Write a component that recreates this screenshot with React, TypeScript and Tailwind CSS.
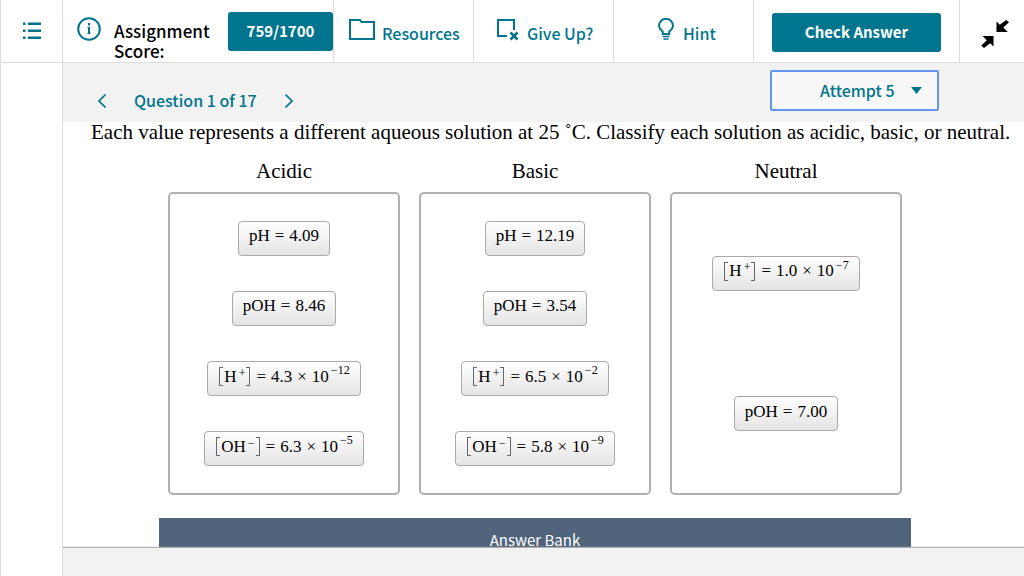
import { Fragment, useState } from "react";
import type { ReactNode } from "react";
import clsx from "clsx";

type Tile = {
  ion?: string;
  charge?: string;
  label?: string;
  value: string;
  exponent?: string;
};

const bins: { title: string; tiles: Tile[] }[] = [
  {
    title: "Acidic",
    tiles: [
      { label: "pH", value: "4.09" },
      { label: "pOH", value: "8.46" },
      { ion: "H", charge: "+", value: "4.3", exponent: "−12" },
      { ion: "OH", charge: "−", value: "6.3", exponent: "−5" },
    ],
  },
  {
    title: "Basic",
    tiles: [
      { label: "pH", value: "12.19" },
      { label: "pOH", value: "3.54" },
      { ion: "H", charge: "+", value: "6.5", exponent: "−2" },
      { ion: "OH", charge: "−", value: "5.8", exponent: "−9" },
    ],
  },
  {
    title: "Neutral",
    tiles: [
      { ion: "H", charge: "+", value: "1.0", exponent: "−7" },
      { label: "pOH", value: "7.00" },
    ],
  },
];

function Sup({ children }: { children: ReactNode }) {
  return <span className="ml-[2px] self-start text-[12px] leading-4">{children}</span>;
}

// tall thin bracket around an ion
function Bracket({ side }: { side: "left" | "right" }) {
  return (
    <span
      className={clsx(
        "h-[19px] w-1 border-y border-[#666]",
        side === "left" ? "mr-px border-l" : "ml-px border-r"
      )}
    />
  );
}

function TileButton({ tile }: { tile: Tile }) {
  return (
    <button
      type="button"
      className="flex h-[35px] items-center rounded border border-[#a9a9a9] bg-linear-to-b from-white to-[#e4e4e4] px-[10px] pb-1 font-['Liberation_Serif',serif] text-[17px] leading-6 whitespace-nowrap text-black"
    >
      {tile.label && <span>{tile.label}</span>}
      {tile.ion && (
        <span className="mx-px flex items-center">
          <Bracket side="left" />
          <span>{tile.ion}</span>
          <Sup>{tile.charge}</Sup>
          <Bracket side="right" />
        </span>
      )}
      <span className="mx-[5px]">=</span>
      <span>{tile.value}</span>
      {tile.exponent && (
        <Fragment>
          <span className="mx-[5px]">×</span>
          <span>10</span>
          <Sup>{tile.exponent}</Sup>
        </Fragment>
      )}
    </button>
  );
}

function ToolButton({ label, className, children }: { label: string; className?: string; children: ReactNode }) {
  return (
    <button
      type="button"
      className={clsx("flex items-center border-l border-[#dcdcdc] text-[16px] font-medium text-[#00758d]", className)}
    >
      {children}
      <span className="pt-[3px]">{label}</span>
    </button>
  );
}

export default function App() {
  const [attempt, setAttempt] = useState("5");

  return (
    <div className="flex h-screen overflow-hidden border-l border-[#dcdcdc] bg-white font-['Noto_Sans_CJK_SC',sans-serif] text-black">
      <aside className="w-[62px] shrink-0 border-r border-[#dcdcdc]">
        <button type="button" aria-label="Contents" className="flex h-[63px] w-full items-center justify-center border-b border-[#dcdcdc] text-[#00758d]">
          <svg className="h-[18px] w-[18px]" viewBox="0 0 18 18" fill="currentColor">
            <path d="M0 .5h2.500v2.500H0zM5 .5h13v2.500H5zM0 7.500h2.500v2.500H0zM5 7.500h13v2.500H5zM0 14.500h2.500v2.500H0zM5 14.500h13v2.500H5z" />
          </svg>
        </button>
      </aside>

      <div className="flex min-w-0 flex-1 flex-col overflow-hidden">
        <header className="flex h-[63px] shrink-0 border-b border-[#dcdcdc]">
          <div className="flex min-w-0 flex-1 items-start">
            <button type="button" aria-label="Score information" className="mt-[17px] ml-[14px] shrink-0 text-[#00758d]">
              <svg className="h-6 w-6" viewBox="0 0 24 24" fill="none" stroke="currentColor" strokeWidth={2}>
                <circle cx="12" cy="12" r="10.800" />
                <path d="M12 10v7M12 6v2.500" />
                <path d="M10.500 10.500H12M10.500 16.500h3" strokeWidth={1} />
              </svg>
            </button>
            <div className="mt-[21px] ml-[13px] flex-1 text-[17px] leading-5 font-medium">Assignment Score:</div>
            <div className="mt-3 flex h-[39px] w-[105px] shrink-0 items-center justify-center rounded-[3px] bg-[#00758d] text-[15px] font-bold text-white">759/1700</div>
          </div>
          <ToolButton label="Resources" className="w-[140px] gap-[7px] pl-[15px]">
            <svg className="mb-1 h-[22px] w-[26px]" viewBox="0 0 26 22" fill="none" stroke="currentColor" strokeWidth={2}>
              <path d="M1 21V2h10l1.500 2H25v17z" />
            </svg>
          </ToolButton>
          <ToolButton label="Give Up?" className="w-[140px] gap-2 pl-[22px]">
            <svg className="mb-1 h-[23px] w-[23px]" viewBox="0 0 23 23" fill="none" stroke="currentColor" strokeWidth={2}>
              <path d="M18 12V2H2V18H11" />
              <path d="M14.500 14.500l7 7M21.500 14.500l-7 7" strokeWidth={2.6} />
            </svg>
          </ToolButton>
          <ToolButton label="Hint" className="w-[140px] gap-[9px] pl-11">
            <svg className="mb-1 h-[22px] w-4" viewBox="0 0 16 22" fill="none" stroke="currentColor" strokeWidth={2}>
              <path d="M4.700 16v-2.500C3 12 1 10.500 1 7.800a7 7 0 0 1 14 0c0 2.700-2 4.200-3.700 5.700V16z" />
              <path d="M4.500 18.500h7M5.500 21h5" strokeWidth={1.5} />
            </svg>
          </ToolButton>
          <div className="flex w-[206px] items-center border-l border-[#dcdcdc] px-[18px] pt-[2px]">
            <button type="button" className="h-[39px] w-full rounded-[3px] bg-[#00758d] text-[15px] font-bold text-white">Check Answer</button>
          </div>
          <button type="button" aria-label="Exit full screen" className="flex w-[65px] items-center justify-center border-l border-[#dcdcdc] pt-[6px] pl-[6px]">
            <svg className="h-[28px] w-[28px]" viewBox="0 0 28 28" fill="currentColor">
              <path d="M15.500 1.500l3.300 3.300L25.200 0 28 2.300l-5.700 5.200 4.500 4.500H15.500zM1.500 16h11v10.500l-3.300-3.200L3 28 .300 25.500l5.500-5.200z" />
            </svg>
          </button>
        </header>

        <div className="flex h-[59px] shrink-0 items-start justify-between bg-[#f2f2f2] pr-[85px] pl-[31px] text-[#00758d]">
          <nav className="mt-[25px] flex h-6 items-center text-[16px] font-medium">
            <a href="#previous" aria-label="Previous question" className="p-1">
              <svg className="h-4 w-2" viewBox="0 0 8 16" fill="none" stroke="currentColor" strokeWidth={1.7}>
                <path d="M7.500 2.500L1 9l6.500 6.500" />
              </svg>
            </a>
            <span className="mx-6">Question 1 of 17</span>
            <a href="#next" aria-label="Next question" className="p-1">
              <svg className="h-4 w-2" viewBox="0 0 8 16" fill="none" stroke="currentColor" strokeWidth={1.7}>
                <path d="M.500 2.500L7 9l-6.500 6.500" />
              </svg>
            </a>
          </nav>
          <div className="relative mt-[7px]">
            <select
              aria-label="Attempt"
              value={attempt}
              onChange={(e) => setAttempt(e.target.value)}
              className="h-[41px] w-[169px] appearance-none rounded-[2px] border-2 border-[#6496f0] bg-[#f8f8f8] pb-[2px] pl-12 text-[16px] font-medium outline-none"
            >
              {["1", "2", "3", "4", "5"].map((n) => (
                <option key={n} value={n}>{`Attempt ${n}`}</option>
              ))}
            </select>
            <svg className="pointer-events-none absolute top-[17px] right-[17px] h-[7px] w-[11px]" viewBox="0 0 11 7" fill="currentColor">
              <path d="M0 0h11L5.500 7z" />
            </svg>
          </div>
        </div>

        <main className="min-h-0 flex-1 overflow-hidden pr-[17px] font-['Liberation_Serif',serif] text-[21px] leading-5">
          <p className="pl-7 whitespace-nowrap">
            Each value represents a different aqueous solution at 25 ˚C. Classify each solution as acidic, basic, or neutral.
          </p>
          <div className="mx-auto w-[752px]">
            <div className="mt-[17px] flex gap-[19px] px-[9px]">
              {bins.map((bin) => (
                <section key={bin.title} className="flex-1">
                  <h2 className="text-center leading-6">{bin.title}</h2>
                  <div className="mt-[9px] flex h-[303px] flex-col items-center justify-around rounded-[5px] border-2 border-[#b0b0b0] py-[9px]">
                    {bin.tiles.map((tile, i) => (
                      <TileButton key={i} tile={tile} />
                    ))}
                  </div>
                </section>
              ))}
            </div>
            <h2 className="mt-[23px] bg-[#50647c] pt-3 text-center font-['Noto_Sans_CJK_SC',sans-serif] text-[15px] leading-5 text-white">Answer Bank</h2>
          </div>
        </main>

        <footer className="relative h-[28px] shrink-0 bg-[#f2f2f2] shadow-[0_-1px_1px_#b0b0b0]" />
      </div>
    </div>
  );
}
